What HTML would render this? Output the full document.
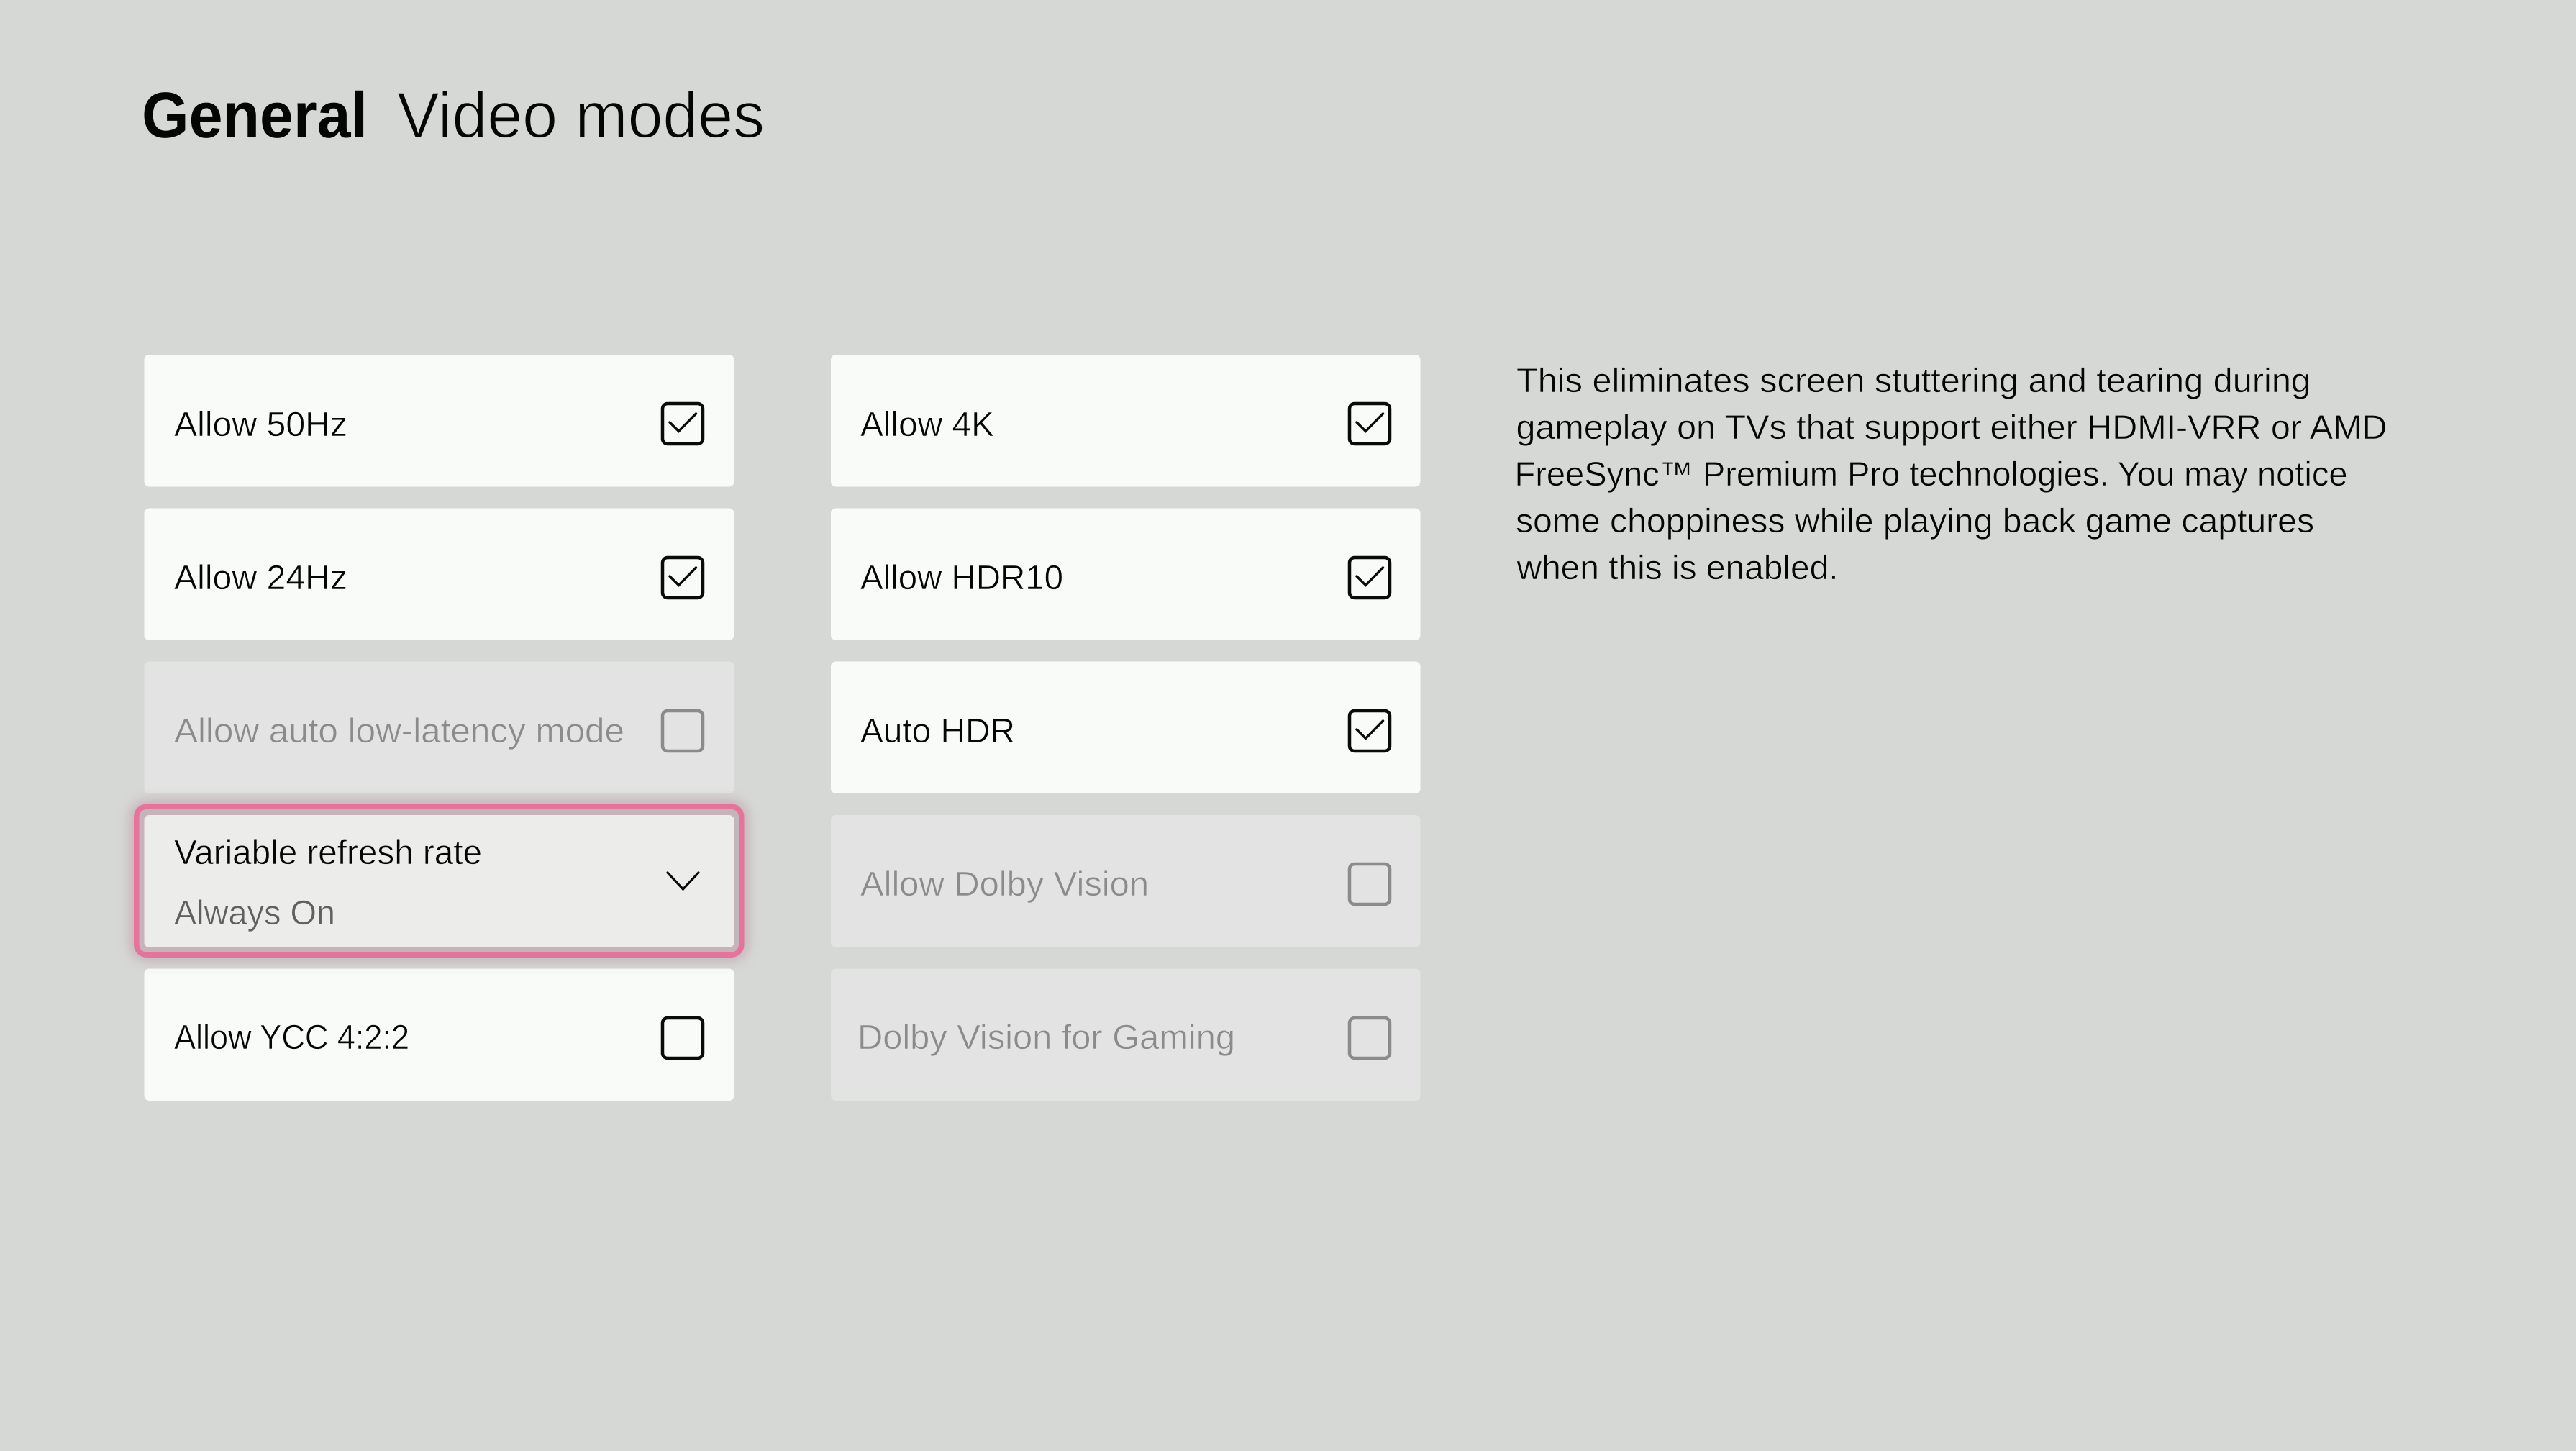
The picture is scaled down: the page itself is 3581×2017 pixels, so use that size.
<!DOCTYPE html>
<html lang="en">
<head>
<meta charset="utf-8">
<title>General Video modes</title>
<style>
html,body{margin:0;padding:0;background:#d6d8d5;width:3581px;height:2017px;overflow:hidden}
svg{display:block}
text{font-family:"Liberation Sans",Arial,sans-serif;text-rendering:geometricPrecision}
.t{font-size:48px;fill:#050505;stroke:#f9fbf8;stroke-width:.6}
.d{font-size:48px;fill:#8a8b8a;stroke:#e2e3e2;stroke-width:.6}
.p{font-size:47.5px;fill:#050505;stroke:#d6d8d5;stroke-width:.6}
.card{fill:#f9fbf8}
.off{fill:#e2e3e2}
.box{fill:none;stroke:#0a0a0a;stroke-width:4.5}
.boxd{fill:none;stroke:#8a8b8a;stroke-width:4.5}
.chk{fill:none;stroke:#0a0a0a;stroke-width:3.4;stroke-linecap:round;stroke-linejoin:miter}
</style>
</head>
<body>
<svg xmlns="http://www.w3.org/2000/svg" width="3581" height="2017" viewBox="0 0 3581 2017">
<defs>
<filter id="glow" x="-10%" y="-30%" width="120%" height="160%"><feGaussianBlur stdDeviation="9"/></filter>
</defs>
<rect width="3581" height="2017" fill="#d6d8d5"/>

<text x="197" y="191" font-size="90" font-weight="700" fill="#050505" textLength="314" lengthAdjust="spacingAndGlyphs">General</text>
<text x="552" y="191" font-size="90" fill="#050505" stroke="#d6d8d5" stroke-width="1.4" textLength="511" lengthAdjust="spacingAndGlyphs">Video modes</text>

<!-- left column -->
<rect class="card" x="200.5" y="493" width="820" height="183.5" rx="7"/>
<rect class="card" x="200.5" y="706.5" width="820" height="183.5" rx="7"/>
<rect class="off" x="200.5" y="919.5" width="820" height="183.5" rx="7"/>
<rect class="card" x="200.5" y="1346.5" width="820" height="183.5" rx="7"/>

<!-- right column -->
<rect class="card" x="1155" y="493" width="819.5" height="183.5" rx="7"/>
<rect class="card" x="1155" y="706.5" width="819.5" height="183.5" rx="7"/>
<rect class="card" x="1155" y="919.5" width="819.5" height="183.5" rx="7"/>
<rect class="off" x="1155" y="1133" width="819.5" height="183.5" rx="7"/>
<rect class="off" x="1155" y="1346.5" width="819.5" height="183.5" rx="7"/>

<!-- focus ring -->
<rect x="190" y="1121" width="841" height="206" rx="14" fill="none" stroke="#b98a9c" stroke-width="14" opacity=".7" filter="url(#glow)"/>
<rect x="190" y="1121" width="841" height="206" rx="14" fill="#c8b3ba"/>
<rect x="189.75" y="1121.25" width="841" height="206" rx="14" fill="none" stroke="#e4749b" stroke-width="7.5"/>
<rect x="200.5" y="1133" width="820" height="184" rx="7" fill="#ececeb"/>

<!-- left labels -->
<text class="t" x="242" y="606" textLength="241" lengthAdjust="spacingAndGlyphs">Allow 50Hz</text>
<text class="t" x="242" y="819" textLength="241" lengthAdjust="spacingAndGlyphs">Allow 24Hz</text>
<text class="d" x="242" y="1032" textLength="626" lengthAdjust="spacingAndGlyphs">Allow auto low-latency mode</text>
<text class="t" x="242" y="1201" style="stroke:#ececeb" textLength="428" lengthAdjust="spacingAndGlyphs">Variable refresh rate</text>
<text x="242" y="1285" font-size="48" fill="#5f605f" stroke="#ececeb" stroke-width=".6" textLength="224" lengthAdjust="spacingAndGlyphs">Always On</text>
<text class="t" x="242" y="1458" textLength="327" lengthAdjust="spacingAndGlyphs">Allow YCC 4:2:2</text>

<!-- right labels -->
<text class="t" x="1196" y="606" textLength="186" lengthAdjust="spacingAndGlyphs">Allow 4K</text>
<text class="t" x="1196" y="819" textLength="282" lengthAdjust="spacingAndGlyphs">Allow HDR10</text>
<text class="t" x="1196" y="1032" textLength="215" lengthAdjust="spacingAndGlyphs">Auto HDR</text>
<text class="d" x="1196" y="1245" textLength="401" lengthAdjust="spacingAndGlyphs">Allow Dolby Vision</text>
<text class="d" x="1192" y="1458" textLength="525" lengthAdjust="spacingAndGlyphs">Dolby Vision for Gaming</text>

<!-- left checkboxes -->
<rect class="box" x="921" y="561" width="56" height="56" rx="7"/>
<path class="chk" d="M931 587L943.5 599.5L967.5 575"/>
<rect class="box" x="921" y="775" width="56" height="56" rx="7"/>
<path class="chk" d="M931 801L943.5 813.5L967.5 789"/>
<rect class="boxd" x="921" y="988" width="56" height="56" rx="7"/>
<path fill="none" stroke="#0a0a0a" stroke-width="3.2" stroke-linecap="round" d="M928 1213L949.5 1236L971 1213"/>
<rect class="box" x="921" y="1415" width="56" height="56" rx="7"/>

<!-- right checkboxes -->
<rect class="box" x="1876" y="561" width="56" height="56" rx="7"/>
<path class="chk" d="M1886 587L1898.5 599.5L1922.5 575"/>
<rect class="box" x="1876" y="775" width="56" height="56" rx="7"/>
<path class="chk" d="M1886 801L1898.5 813.5L1922.5 789"/>
<rect class="box" x="1876" y="988" width="56" height="56" rx="7"/>
<path class="chk" d="M1886 1014L1898.5 1026.5L1922.5 1002"/>
<rect class="boxd" x="1876" y="1201" width="56" height="56" rx="7"/>
<rect class="boxd" x="1876" y="1415" width="56" height="56" rx="7"/>

<!-- description -->
<text class="p" x="2108" y="545" textLength="1104" lengthAdjust="spacingAndGlyphs">This eliminates screen stuttering and tearing during</text>
<text class="p" x="2107.5" y="610" textLength="1211" lengthAdjust="spacingAndGlyphs">gameplay on TVs that support either HDMI-VRR or AMD</text>
<text class="p" x="2105.5" y="675" textLength="1158" lengthAdjust="spacingAndGlyphs">FreeSync™ Premium Pro technologies. You may notice</text>
<text class="p" x="2107" y="740" textLength="1110" lengthAdjust="spacingAndGlyphs">some choppiness while playing back game captures</text>
<text class="p" x="2108.5" y="805" textLength="447" lengthAdjust="spacingAndGlyphs">when this is enabled.</text>
</svg>
</body>
</html>
